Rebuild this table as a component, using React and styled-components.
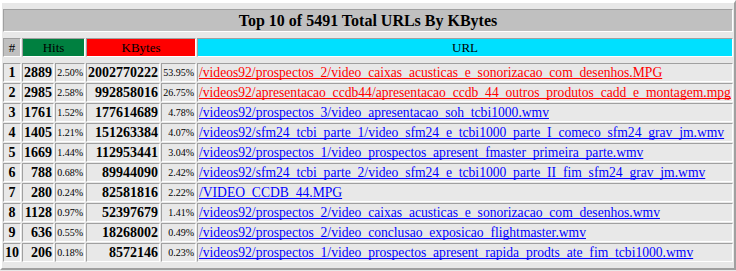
import React from 'react';
import styled, { createGlobalStyle } from 'styled-components';

const GlobalStyle = createGlobalStyle`
    html, body {
        margin: 0;
        padding: 0;
        background: #E8E8E8;
    }
`;

const urls = [
    { hits: 2889, hitsPct: '2.50%', kb: 2002770222, kbPct: '53.95%', url: '/videos92/prospectos_2/video_caixas_acusticas_e_sonorizacao_com_desenhos.MPG', hot: true },
    { hits: 2985, hitsPct: '2.58%', kb: 992858016, kbPct: '26.75%', url: '/videos92/apresentacao_ccdb44/apresentacao_ccdb_44_outros_produtos_cadd_e_montagem.mpg', hot: true },
    { hits: 1761, hitsPct: '1.52%', kb: 177614689, kbPct: '4.78%', url: '/videos92/prospectos_3/video_apresentacao_soh_tcbi1000.wmv' },
    { hits: 1405, hitsPct: '1.21%', kb: 151263384, kbPct: '4.07%', url: '/videos92/sfm24_tcbi_parte_1/video_sfm24_e_tcbi1000_parte_I_comeco_sfm24_grav_jm.wmv' },
    { hits: 1669, hitsPct: '1.44%', kb: 112953441, kbPct: '3.04%', url: '/videos92/prospectos_1/video_prospectos_apresent_fmaster_primeira_parte.wmv' },
    { hits: 788, hitsPct: '0.68%', kb: 89944090, kbPct: '2.42%', url: '/videos92/sfm24_tcbi_parte_2/video_sfm24_e_tcbi1000_parte_II_fim_sfm24_grav_jm.wmv' },
    { hits: 280, hitsPct: '0.24%', kb: 82581816, kbPct: '2.22%', url: '/VIDEO_CCDB_44.MPG' },
    { hits: 1128, hitsPct: '0.97%', kb: 52397679, kbPct: '1.41%', url: '/videos92/prospectos_2/video_caixas_acusticas_e_sonorizacao_com_desenhos.wmv' },
    { hits: 636, hitsPct: '0.55%', kb: 18268002, kbPct: '0.49%', url: '/videos92/prospectos_2/video_conclusao_exposicao_flightmaster.wmv' },
    { hits: 206, hitsPct: '0.18%', kb: 8572146, kbPct: '0.23%', url: '/videos92/prospectos_1/video_prospectos_apresent_rapida_prodts_ate_fim_tcbi1000.wmv' },
];

// column widths, border-box of each cell
const columns = [18, 32, 30, 74, 35, 536];

const Table = styled.table`
    width: 736px;
    table-layout: fixed;
    border-collapse: separate;
    border-spacing: 1px;
    border-style: solid;
    border-width: 3px 2px 2px 2px;
    border-color: #ffffff #a0a0a0 #a0a0a0 #ffffff;
    background: #E8E8E8;
    font-family: "Liberation Serif", "Times New Roman", serif;
    color: #000000;
`;

const SpacerCell = styled.td`
    height: 4px;
    padding: 0;
    border: none;
`;

const cellBorder = `
    border-style: solid;
    border-width: 1px;
    border-color: #a0a0a0 #ffffff #ffffff #a0a0a0;
    padding: 1px;
`;

const TitleCell = styled.th`
    ${cellBorder}
    height: 23px;
    box-sizing: border-box;
    background: #C0C0C0;
    font-size: 16px;
    font-weight: bold;
    line-height: 18px;
    text-align: center;
`;

const HeadCell = styled.th`
    ${cellBorder}
    height: 19px;
    box-sizing: border-box;
    background: ${(p) => p.$bg};
    font-size: 13px;
    font-weight: normal;
    line-height: 15px;
    text-align: center;
`;

const DataCell = styled.td`
    ${cellBorder}
    height: 19px;
    box-sizing: border-box;
    white-space: nowrap;
    overflow: hidden;
    line-height: 15px;
    text-align: ${(p) => p.$align || 'right'};
    font-size: ${(p) => (p.$small ? '10px' : '14px')};
    font-weight: ${(p) => (p.$bold ? 'bold' : 'normal')};
`;

const UrlLink = styled.a`
    font-size: 13.6px;
    color: ${(p) => (p.$hot ? '#FF0000' : '#0000FF')};
    text-decoration: underline;
    text-decoration-skip-ink: none;
`;

const Spacer = () => (
    <tr>
        <SpacerCell colSpan={6} />
    </tr>
);

const App = () => {
    return (
        <>
            <GlobalStyle />
            <Table>
                <colgroup>
                    {columns.map((w, i) => <col key={i} style={{ width: w }} />)}
                </colgroup>
                <tbody>
                    <Spacer />
                    <tr>
                        <TitleCell colSpan={6}>Top 10 of 5491 Total URLs By KBytes</TitleCell>
                    </tr>
                    <Spacer />
                    <tr>
                        <HeadCell $bg="#C0C0C0">#</HeadCell>
                        <HeadCell $bg="#008040" colSpan={2}>Hits</HeadCell>
                        <HeadCell $bg="#FF0000" colSpan={2}>KBytes</HeadCell>
                        <HeadCell $bg="#00E0FF">URL</HeadCell>
                    </tr>
                    <Spacer />
                    {urls.map((row, i) => (
                        <tr key={i}>
                            <DataCell $align="center" $bold>{i + 1}</DataCell>
                            <DataCell $bold>{row.hits}</DataCell>
                            <DataCell $small>{row.hitsPct}</DataCell>
                            <DataCell $bold>{row.kb}</DataCell>
                            <DataCell $small>{row.kbPct}</DataCell>
                            <DataCell $align="left">
                                <UrlLink href="#" $hot={row.hot}>{row.url}</UrlLink>
                            </DataCell>
                        </tr>
                    ))}
                    <Spacer />
                </tbody>
            </Table>
        </>
    );
};

export default App;
